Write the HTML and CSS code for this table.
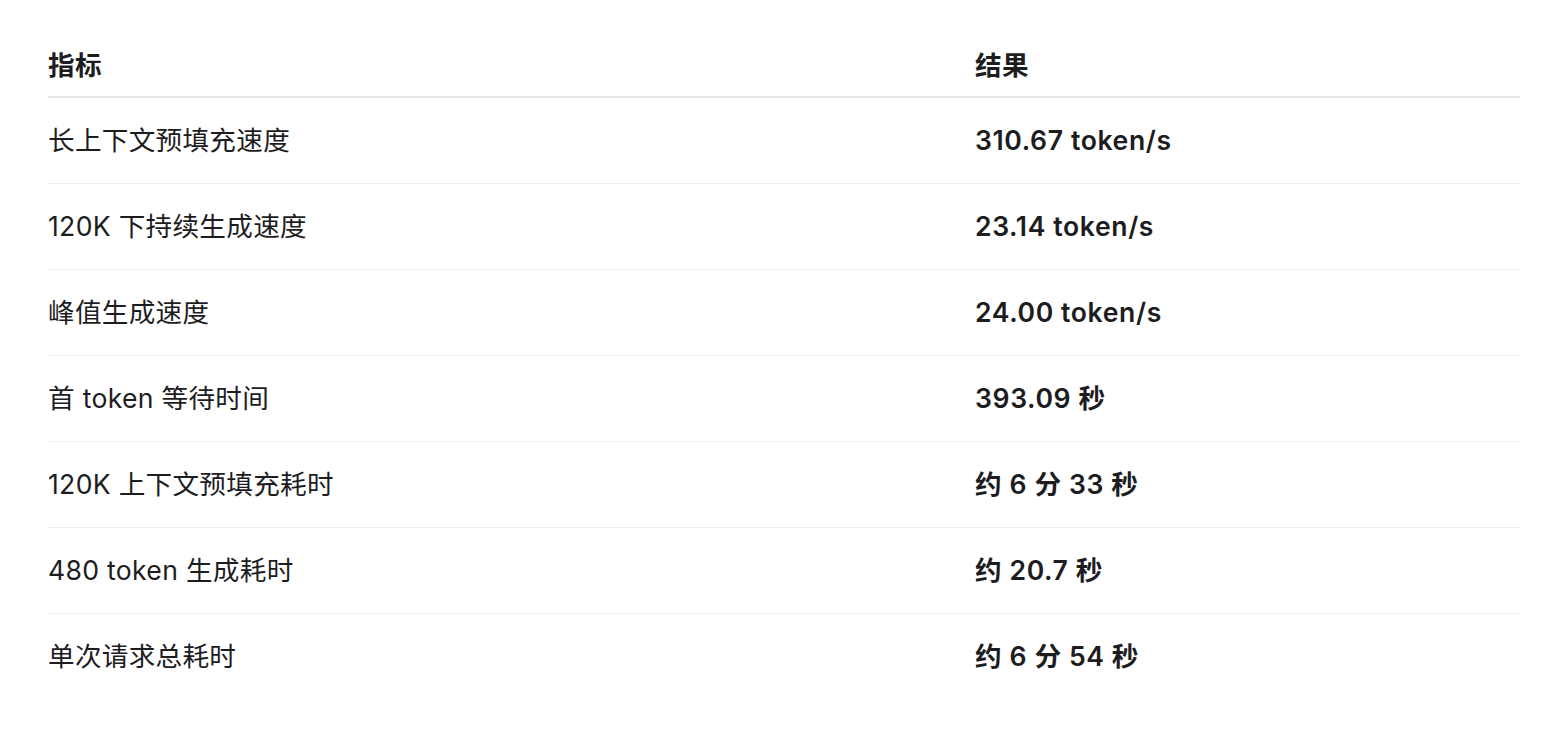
FILE: index.html
```html
<!DOCTYPE html>
<html>
<head>
    <meta charset="utf-8">
    <title>性能指标</title>
    <link rel="stylesheet" href="styles.css">
</head>
<body>
    <div class="page">
        <table class="metrics">
            <thead>
                <tr>
                    <th class="col-name">指标</th>
                    <th>结果</th>
                </tr>
            </thead>
            <tbody>
                <tr>
                    <td>长上下文预填充速度</td>
                    <td class="value">310.67 token/s</td>
                </tr>
                <tr>
                    <td>120K 下持续生成速度</td>
                    <td class="value">23.14 token/s</td>
                </tr>
                <tr>
                    <td>峰值生成速度</td>
                    <td class="value">24.00 token/s</td>
                </tr>
                <tr>
                    <td>首 token 等待时间</td>
                    <td class="value">393.09 秒</td>
                </tr>
                <tr>
                    <td>120K 上下文预填充耗时</td>
                    <td class="value">约 6 分 33 秒</td>
                </tr>
                <tr>
                    <td>480 token 生成耗时</td>
                    <td class="value">约 20.7 秒</td>
                </tr>
                <tr>
                    <td>单次请求总耗时</td>
                    <td class="value">约 6 分 54 秒</td>
                </tr>
            </tbody>
        </table>
    </div>
</body>
</html>
```

FILE: styles.css
```css
body {
    margin: 0;
    background: #fff;
    color: #1d1d1f;
    font-family: Inter, "Noto Sans CJK SC", sans-serif;
}

.page {
    padding: 34px 34px 0 48px;
}

.metrics {
    width: 100%;
    border-collapse: collapse;
    font-size: 26.6px;
    line-height: 36px;
    letter-spacing: 0.3px;
}

.metrics th {
    text-align: left;
    font-weight: 600;
    padding: 13px 0;
    border-bottom: 2px solid #e5e5e5;
}

.metrics .col-name {
    width: 927px;
}

.metrics td {
    padding: 24px 0 25px;
    border-bottom: 1px solid #efefef;
}

.metrics tbody tr:last-child td {
    border-bottom: none;
}

.metrics .value {
    font-weight: 600;
    letter-spacing: 0.6px;
}
```
